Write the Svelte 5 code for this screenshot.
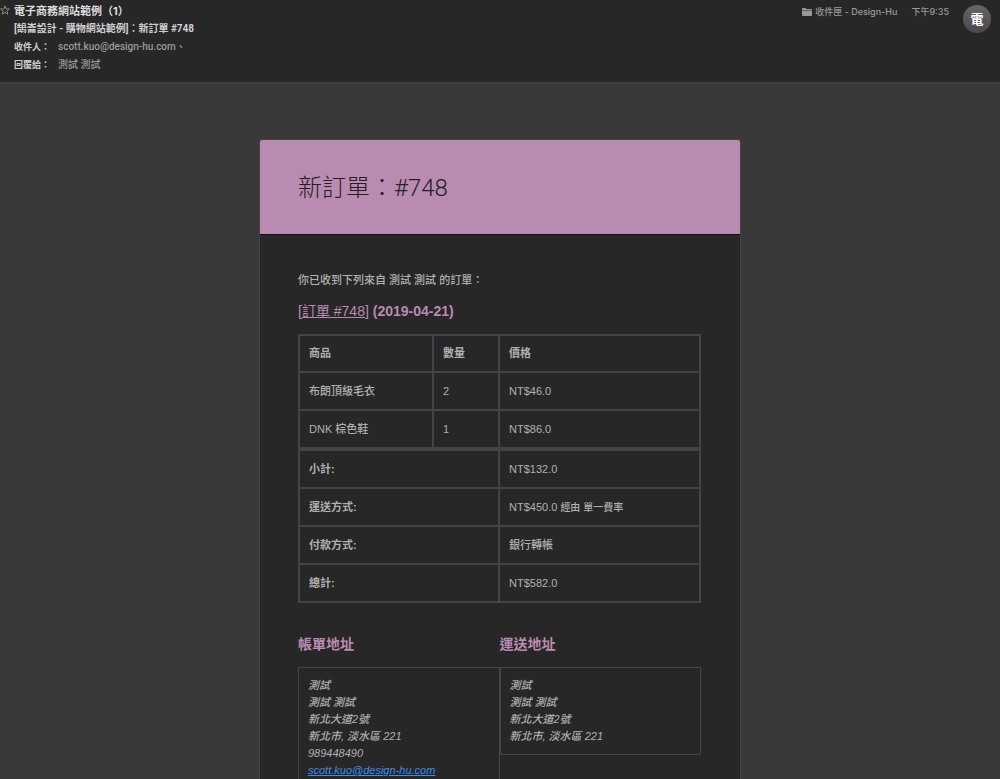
<script lang="ts">
  interface Item {
    name: string;
    qty: number;
    price: string;
  }

  interface Total {
    label: string;
    value: string;
    note?: string;
  }

  const items: Item[] = [
    { name: '布朗頂級毛衣', qty: 2, price: 'NT$46.0' },
    { name: 'DNK 棕色鞋', qty: 1, price: 'NT$86.0' }
  ];

  const totals: Total[] = [
    { label: '小計:', value: 'NT$132.0' },
    { label: '運送方式:', value: 'NT$450.0', note: '經由 單一費率' },
    { label: '付款方式:', value: '銀行轉帳' },
    { label: '總計:', value: 'NT$582.0' }
  ];

  const address = ['測試', '測試 測試', '新北大道2號', '新北市, 淡水區 221'];
  const email = 'scott.kuo@design-hu.com';

  let starred = $state(false);
</script>

<div class="mail">
  <header class="mail-header">
    <button
      class="star"
      class:starred
      aria-label="星號"
      aria-pressed={starred}
      onclick={() => (starred = !starred)}
    >
      <svg viewBox="0 0 10 10" width="10" height="10">
        <path d="M5 .8 6.1 3.9 9.4 4 6.8 6 7.7 9.2 5 7.3 2.3 9.2 3.2 6 .6 4 3.9 3.9Z" />
      </svg>
    </button>
    <div class="headings">
      <h1 class="sender">電子商務網站範例（1）</h1>
      <p class="subject">[鵠崙設計 - 購物網站範例]：新訂單 #748</p>
      <p class="field"><b>收件人：</b><span>{email}、</span></p>
      <p class="field"><b>回覆給：</b><span>測試 測試</span></p>
    </div>
    <div class="meta">
      <svg class="folder" viewBox="0 0 10 8" width="10" height="8">
        <path d="M0 2V1Q0 0 1 0H3.4L4.4 1H9Q10 1 10 2Z" />
        <path d="M0 2.6H10V7Q10 8 9 8H1Q0 8 0 7Z" />
      </svg>
      <span>收件匣 - Design-Hu</span>
      <time>下午9:35</time>
    </div>
    <div class="avatar">電</div>
  </header>

  <main class="mail-body">
    <article class="order">
      <div class="banner">
        <h2>新訂單：#748</h2>
      </div>

      <div class="content">
        <p class="intro">你已收到下列來自 測試 測試 的訂單：</p>
        <h3><a class="order-link" href="#order-748">[訂單 #748]</a> (2019-04-21)</h3>

        <table>
          <colgroup>
            <col class="col-name" />
            <col class="col-qty" />
            <col />
          </colgroup>
          <thead>
            <tr>
              <th scope="col">商品</th>
              <th scope="col">數量</th>
              <th scope="col">價格</th>
            </tr>
          </thead>
          <tbody>
            {#each items as item}
              <tr>
                <td>{item.name}</td>
                <td>{item.qty}</td>
                <td>{item.price}</td>
              </tr>
            {/each}
          </tbody>
          <tfoot>
            {#each totals as total}
              <tr>
                <th scope="row" colspan="2">{total.label}</th>
                <td>
                  {total.value}
                  {#if total.note}<small>{total.note}</small>{/if}
                </td>
              </tr>
            {/each}
          </tfoot>
        </table>

        <div class="addresses">
          <section class="billing">
            <h3>帳單地址</h3>
            <address>
              {#each address as line}
                <div>{line}</div>
              {/each}
              <div>989448490</div>
              <div><a href="mailto:{email}">{email}</a></div>
            </address>
          </section>
          <section>
            <h3>運送地址</h3>
            <address>
              {#each address as line}
                <div>{line}</div>
              {/each}
            </address>
          </section>
        </div>
      </div>
    </article>
  </main>
</div>

<style>
  :global(body) {
    margin: 0;
    background: #393939;
  }

  .mail {
    display: flex;
    flex-direction: column;
    height: 100vh;
    color: #b0b0b0;
    font-family: 'Liberation Sans', 'Noto Sans CJK TC', sans-serif;
    font-size: 11px;
    font-weight: 500;
  }

  h1,
  h2,
  h3,
  p {
    margin: 0;
  }

  .mail-header {
    display: flex;
    align-items: flex-start;
    padding: 0 9px 8px 0;
    background: #272727;
    border-bottom: 1px solid #3f3f3f;
    font-family: Inter, 'Noto Sans CJK TC', sans-serif;
  }

  .star {
    display: flex;
    width: 14px;
    margin-top: 5px;
    padding: 0;
    border: none;
    background: transparent;
    cursor: pointer;
  }

  .star path {
    fill: none;
    stroke: #a0a0a0;
    stroke-width: 0.8;
  }

  .star.starred path {
    fill: #a0a0a0;
  }

  .headings {
    flex: 1;
    padding-top: 2px;
  }

  .sender {
    font-size: 11px;
    font-weight: 700;
    line-height: 18px;
    color: #dcdcdc;
  }

  .subject {
    font-family: Roboto, 'Noto Sans CJK TC', sans-serif;
    font-size: 10px;
    font-weight: 700;
    line-height: 18px;
    color: #cfcfcf;
  }

  .field {
    font-family: Roboto, 'Noto Sans CJK TC', sans-serif;
    font-size: 10px;
    line-height: 18px;
    color: #999;
  }

  .field b {
    margin-right: 8px;
    font-size: 9px;
    color: #cfcfcf;
  }

  .meta {
    display: flex;
    align-items: center;
    padding-top: 3px;
    font-size: 9px;
    line-height: 18px;
    color: #999;
  }

  .folder {
    margin-right: 3px;
    fill: #999;
  }

  .meta time {
    margin: 0 14px;
  }

  .avatar {
    width: 28px;
    height: 28px;
    margin-top: 5px;
    border-radius: 50%;
    background: linear-gradient(#666, #484848);
    color: #fff;
    font-size: 13px;
    font-weight: 700;
    line-height: 28px;
    text-align: center;
  }

  .mail-body {
    flex: 1;
    overflow-y: auto;
    scrollbar-width: none;
    padding: 56px 16px;
    background: #393939;
  }

  .order {
    max-width: 480px;
    margin: 0 auto;
    border: 1px solid #444;
    border-radius: 3px;
    background: #272727;
    overflow: hidden;
  }

  .banner {
    padding: 30px 38px 28px;
    background: #b98bb0;
    border-bottom: 1px solid #111;
  }

  h2 {
    font-family: Roboto, 'Noto Sans CJK TC', sans-serif;
    font-size: 24px;
    font-weight: 300;
    line-height: 36px;
    color: #222;
  }

  .content {
    padding: 36px 39px 40px 38px;
  }

  .intro {
    line-height: 18px;
    margin-bottom: 13px;
  }

  h3 {
    font-size: 14px;
    font-weight: 700;
    line-height: 18px;
    color: #b98bb0;
  }

  .order-link {
    color: #b98bb0;
    font-weight: 400;
  }

  table {
    width: 100%;
    margin: 14px 0 32px;
    border: 2px solid #444;
    border-collapse: collapse;
    table-layout: fixed;
  }

  .col-name {
    width: 134px;
  }

  .col-qty {
    width: 66px;
  }

  th,
  td {
    padding: 9px;
    border: 2px solid #444;
    line-height: 18px;
    text-align: left;
  }

  thead th {
    line-height: 17px;
  }

  tfoot tr:first-child > * {
    border-top-width: 4px;
  }

  small {
    font-size: 10px;
    line-height: 1;
  }

  .addresses {
    display: flex;
    align-items: stretch;
  }

  .addresses section {
    display: flex;
    flex: 1;
    flex-direction: column;
  }

  .billing address {
    padding-bottom: 36px;
  }

  address {
    margin-top: 14px;
    padding: 9px;
    border: 1px solid #444;
    line-height: 17px;
  }

  address a {
    color: #3b8ee8;
  }
</style>
